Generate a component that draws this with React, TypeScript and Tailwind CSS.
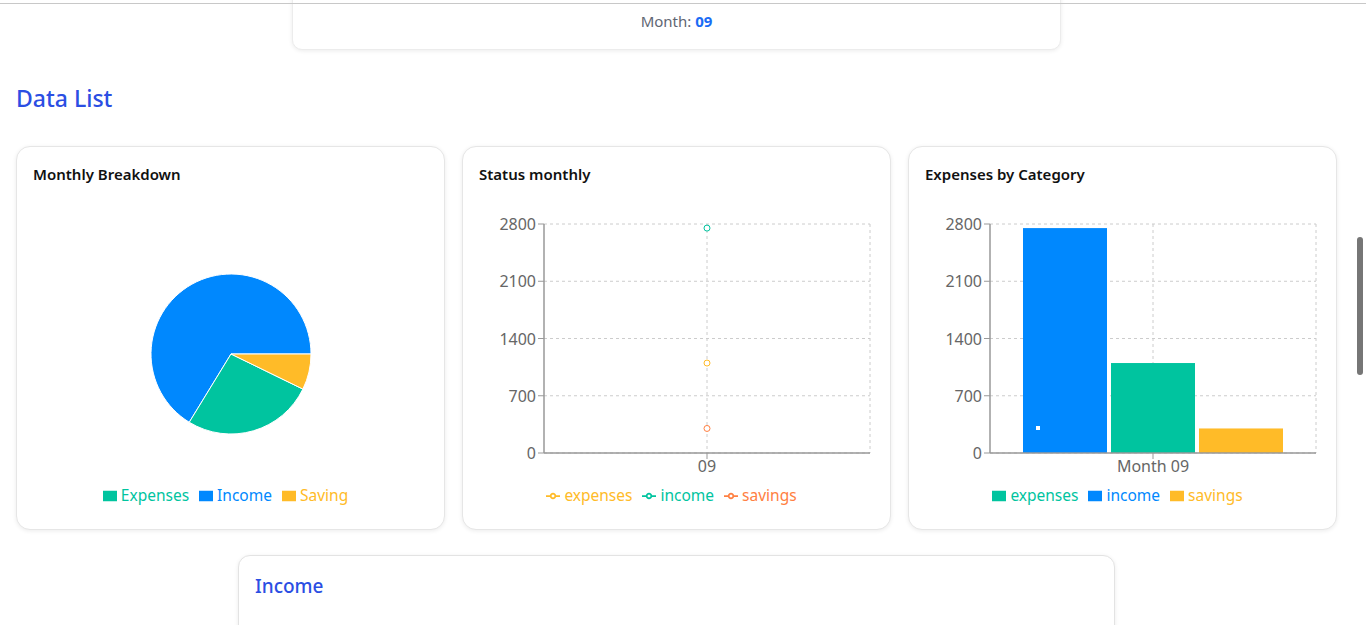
import React from "react";

const FONT = { fontFamily: '"Noto Sans", "Open Sans", sans-serif' };

const BLUE = "#0088fe";
const GREEN = "#00c49f";
const YELLOW = "#ffbb28";
const ORANGE = "#ff8042";

const TICKS = [0, 700, 1400, 2100, 2800];
const AX_L = 65;
const AX_R = 391;
const TOP = 19;
const BOT = 248;
const yOf = (v: number) => BOT - (v / 2800) * (BOT - TOP);

function Grid({ midX }: { midX: number }) {
  return (
    <g>
      {TICKS.map((t) => (
        <line key={t} x1={AX_L} x2={AX_R} y1={yOf(t)} y2={yOf(t)} stroke="#ccc" strokeDasharray="3 3" />
      ))}
      <line x1={midX} x2={midX} y1={TOP} y2={BOT} stroke="#ccc" strokeDasharray="3 3" />
      <line x1={AX_R} x2={AX_R} y1={TOP} y2={BOT} stroke="#ccc" strokeDasharray="3 3" />
    </g>
  );
}

function Axes({ label, midX }: { label: string; midX: number }) {
  return (
    <g fill="#666" fontSize={16}>
      <line x1={AX_L} x2={AX_L} y1={TOP} y2={BOT} stroke="#999" strokeWidth={1.5} />
      <line x1={AX_L} x2={AX_R} y1={BOT} y2={BOT} stroke="#999" strokeWidth={1.5} />
      {TICKS.map((t) => (
        <g key={t}>
          <line x1={AX_L - 6} x2={AX_L} y1={yOf(t)} y2={yOf(t)} stroke="#999" />
          <text x={AX_L - 8} y={yOf(t) + 6} textAnchor="end">
            {t}
          </text>
        </g>
      ))}
      <line x1={midX} x2={midX} y1={BOT} y2={BOT + 6} stroke="#999" />
      <text x={midX} y={BOT + 19} textAnchor="middle">
        {label}
      </text>
    </g>
  );
}

function RectIcon({ color }: { color: string }) {
  return (
    <svg width="14" height="14" viewBox="0 0 32 32" className="mr-1">
      <path d="M0,4h32v24h-32z" fill={color} />
    </svg>
  );
}

function LineIcon({ color }: { color: string }) {
  return (
    <svg width="14" height="14" viewBox="0 0 32 32" className="mr-1">
      <path
        d="M0,16h10.67A5.33,5.33,0,1,1,21.33,16H32M21.33,16A5.33,5.33,0,1,1,10.67,16"
        fill="none"
        stroke={color}
        strokeWidth={4}
      />
    </svg>
  );
}

function Legend({ items, line }: { items: { name: string; color: string }[]; line?: boolean }) {
  return (
    <ul className="mt-[9px] flex h-6 items-center justify-center text-[15.5px]">
      {items.map((it) => (
        <li key={it.name} className="mr-[10px] flex items-center" style={{ color: it.color }}>
          {line ? <LineIcon color={it.color} /> : <RectIcon color={it.color} />}
          {it.name}
        </li>
      ))}
    </ul>
  );
}

function Card({ title, children }: { title: string; children: React.ReactNode }) {
  return (
    <div className="rounded-[14px] border border-[#e6e6e6] bg-white px-4 pb-[21px] pt-[15px] shadow-[0_1px_4px_rgba(0,0,0,0.08)]">
      <h3 className="text-[15px] font-semibold leading-6 text-[#111]">{title}</h3>
      {children}
    </div>
  );
}

function ChartSvg({ children }: { children: React.ReactNode }) {
  return (
    <svg width="395" height="270" className="mt-[19px] block overflow-visible">
      {children}
    </svg>
  );
}

function PieCard() {
  return (
    <Card title="Monthly Breakdown">
      <ChartSvg>
        <path d="M198,149 L278,149 A80,80 0 1 0 156.26,217.25 Z" fill={BLUE} stroke="#fff" />
        <path d="M198,149 L156.26,217.25 A80,80 0 0 0 269.89,184.1 Z" fill={GREEN} stroke="#fff" />
        <path d="M198,149 L269.89,184.1 A80,80 0 0 0 278,149 Z" fill={YELLOW} stroke="#fff" />
      </ChartSvg>
      <Legend
        items={[
          { name: "Expenses", color: GREEN },
          { name: "Income", color: BLUE },
          { name: "Saving", color: YELLOW },
        ]}
      />
    </Card>
  );
}

function LineCard() {
  const mid = (AX_L + AX_R) / 2;
  return (
    <Card title="Status monthly">
      <ChartSvg>
        <Grid midX={mid} />
        <Axes label="09" midX={mid} />
        <circle cx={mid} cy={yOf(2750)} r={3} fill="#fff" stroke={GREEN} />
        <circle cx={mid} cy={yOf(1100)} r={3} fill="#fff" stroke={YELLOW} />
        <circle cx={mid} cy={yOf(300)} r={3} fill="#fff" stroke={ORANGE} />
      </ChartSvg>
      <Legend
        line
        items={[
          { name: "expenses", color: YELLOW },
          { name: "income", color: GREEN },
          { name: "savings", color: ORANGE },
        ]}
      />
    </Card>
  );
}

function BarCard() {
  const mid = (AX_L + AX_R) / 2;
  const bars = [
    { x: 98, v: 2750, c: BLUE },
    { x: 186, v: 1100, c: GREEN },
    { x: 274, v: 300, c: YELLOW },
  ];
  return (
    <Card title="Expenses by Category">
      <ChartSvg>
        <Grid midX={mid} />
        {bars.map((b) => (
          <rect key={b.x} x={b.x} y={yOf(b.v)} width={84} height={BOT - yOf(b.v)} fill={b.c} />
        ))}
        <rect x={111} y={221} width={4} height={4} fill="#fff" />
        <Axes label="Month 09" midX={mid} />
      </ChartSvg>
      <Legend
        items={[
          { name: "expenses", color: GREEN },
          { name: "income", color: BLUE },
          { name: "savings", color: YELLOW },
        ]}
      />
    </Card>
  );
}

export default function App() {
  return (
    <div className="min-h-screen overflow-hidden bg-white" style={FONT}>
      <div className="fixed left-0 right-0 top-[3px] z-10 h-px bg-[#c8c8c8]" />
      <div className="fixed right-[3px] top-[237px] z-10 h-[138px] w-[6px] rounded-full bg-[#767676]" />

      <div className="w-[1350px] pl-4 pr-[13px]">
        <div className="mx-auto mt-[-20px] flex h-[70px] w-[769px] items-end justify-center rounded-[10px] border border-[#ececec] bg-white pb-[17px] shadow-[0_1px_4px_rgba(0,0,0,0.08)]">
          <p className="text-[15px] text-[#5f6673]">
            Month: <span className="font-bold text-[#1a6cf5]">09</span>
          </p>
        </div>

        <h2 className="mt-8 text-[23px] font-medium leading-8 text-[#2b4ee3]">Data List</h2>

        <div className="mt-8 grid w-[1321px] grid-cols-3 gap-[17px]">
          <PieCard />
          <LineCard />
          <BarCard />
        </div>

        <div className="mx-auto mt-[25px] h-[120px] w-[877px] rounded-[12px] border border-[#e3e3e3] bg-white px-4 pt-4 shadow-[0_1px_4px_rgba(0,0,0,0.08)]">
          <h3 className="text-[19px] font-medium leading-7 text-[#2b4ee3]">Income</h3>
        </div>
      </div>
    </div>
  );
}
